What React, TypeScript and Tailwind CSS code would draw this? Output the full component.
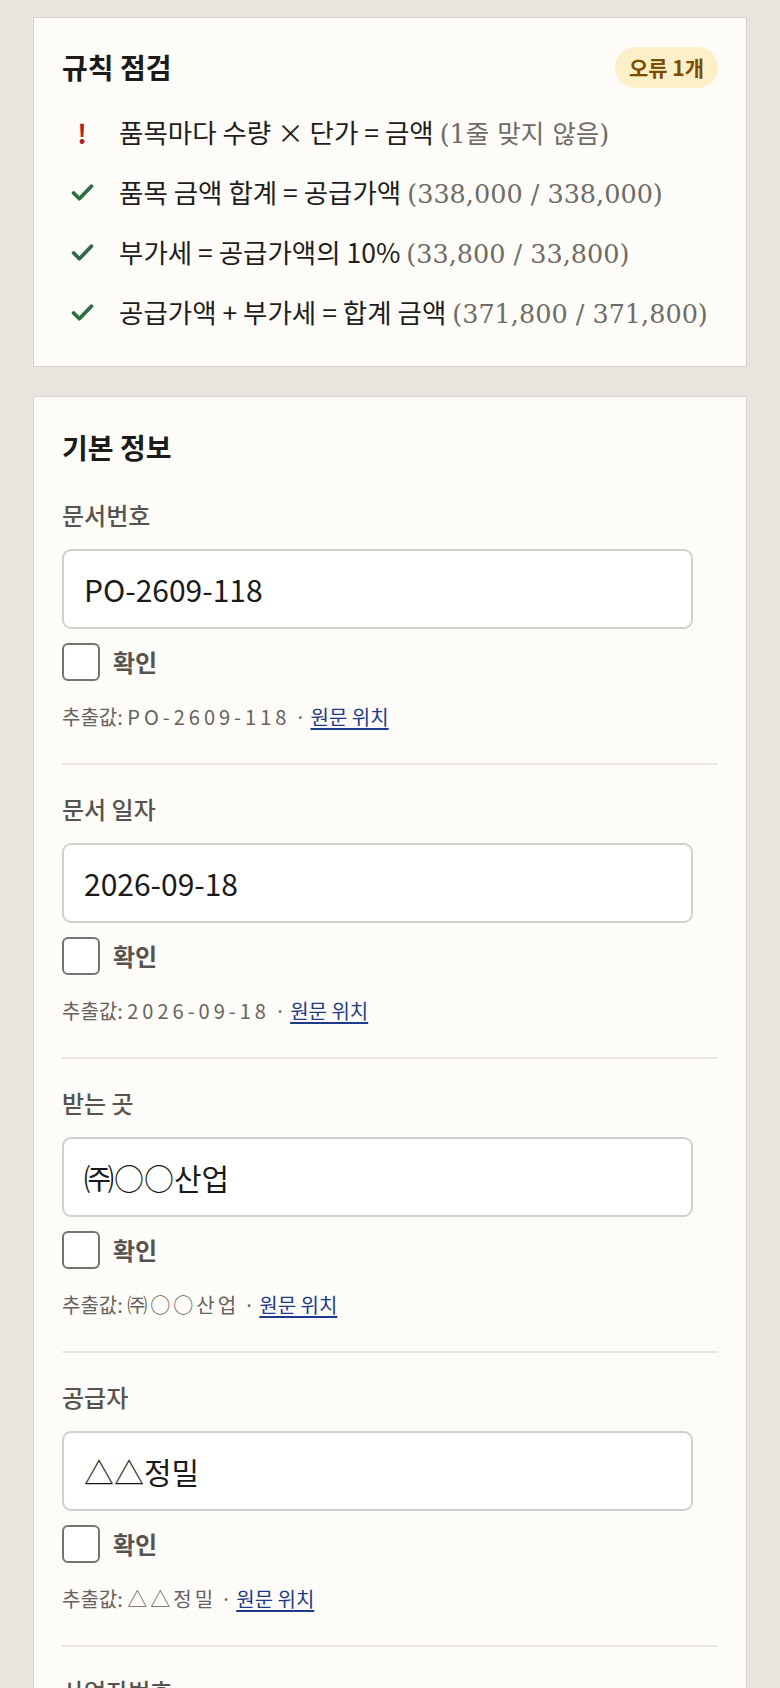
import React from "react"

const sans = { fontFamily: '"Noto Sans CJK KR", "Noto Sans", sans-serif' }
const serif = { fontFamily: '"DejaVu Serif", "Noto Sans CJK KR", serif' }

type Rule = { ok: boolean; text: string; note: string }

const rules: Rule[] = [
  { ok: false, text: "품목마다 수량 × 단가 = 금액", note: "(1줄 맞지 않음)" },
  { ok: true, text: "품목 금액 합계 = 공급가액", note: "(338,000 / 338,000)" },
  { ok: true, text: "부가세 = 공급가액의 10%", note: "(33,800 / 33,800)" },
  { ok: true, text: "공급가액 + 부가세 = 합계 금액", note: "(371,800 / 371,800)" },
]

const fields = [
  { label: "문서번호", value: "PO-2609-118", code: true },
  { label: "문서 일자", value: "2026-09-18", code: true },
  { label: "받는 곳", value: "㈜○○산업", code: false },
  { label: "공급자", value: "△△정밀", code: false },
  { label: "사업자번호", value: "123-45-67890", code: true },
]

const Check = () => (
  <svg width="23" height="19" viewBox="0 0 22 18" fill="none">
    <path d="M2.5 9.5 L8 15 L19.5 3" stroke="#2f6b45" strokeWidth="3.6" strokeLinecap="round" strokeLinejoin="round" />
  </svg>
)

const RuleCheck = () => {
  return (
    <div className="bg-[#fdfcf8] border border-[#d6d3cc] px-[28px] pt-[33px] pb-[37px]">
      <div className="flex justify-between items-center h-[32px]">
        <h2 className="text-[28px] font-bold text-[#1c1b19] leading-[32px]">규칙 점검</h2>
        <span className="bg-[#fdf0c9] text-[#7c4d00] font-bold text-[21px] rounded-full px-[14px] h-[41px] leading-[41px]">오류 1개</span>
      </div>
      <ul className="mt-[33px] flex flex-col gap-[27px]">
        {rules.map((r) => (
          <li key={r.text} className="flex items-center h-[33px] text-[26.5px] leading-[33px] text-[#1f1e1c] whitespace-nowrap">
            <span className="w-[40px] h-[33px] flex items-center justify-center mr-[17px]">
              {r.ok ? <Check /> : <span className="text-[#b42318] font-bold text-[26px] leading-[33px]">!</span>}
            </span>
            <span>
              {r.text}{" "}
              <span className="text-[#6f6b66] text-[25.5px]" style={serif}>
                {r.note}
              </span>
            </span>
          </li>
        ))}
      </ul>
    </div>
  )
}

const Field = ({ label, value, code }: { label: string; value: string; code: boolean }) => {
  return (
    <div className="pt-[27px] pb-[32px] border-b-2 border-[#ebe8e2]">
      <div className="text-[24px] leading-[33px] text-[#57544f] font-medium">{label}</div>
      <input
        readOnly
        value={value}
        className="mt-[18px] w-[631px] h-[80px] bg-white border-2 border-[#d2d0cc] rounded-[9px] px-[20px] text-[30px] text-[#1a1a1a] outline-none"
        style={sans}
      />
      <label className="mt-[14px] flex items-center gap-[13px]">
        <span className="w-[38px] h-[38px] rounded-[6px] border-2 border-[#777470] bg-white" />
        <span className="text-[24px] font-bold text-[#57544f]">확인</span>
      </label>
      <div className="mt-[22px] text-[20px] leading-[28px] text-[#66625d] whitespace-nowrap">
        추출값: <span className={code ? "tracking-[0.2em]" : "tracking-[0.15em]"}>{value}</span> ·{" "}
        <a href="#" className="text-[#1e3a8a] underline underline-offset-[3px]">원문 위치</a>
      </div>
    </div>
  )
}

export default function App() {
  return (
    <div className="min-h-screen bg-[#e8e5df] px-[33px] pt-[17px] pb-[40px] flex flex-col gap-[29px]" style={sans}>
      <RuleCheck />
      <div className="bg-[#fdfcf8] border border-[#d6d3cc] px-[28px] pt-[34px] pb-[20px]">
        <h2 className="text-[28px] font-bold text-[#1c1b19] leading-[32px] mb-[8px]">기본 정보</h2>
        {fields.map((f) => (
          <Field key={f.label} label={f.label} value={f.value} code={f.code} />
        ))}
      </div>
    </div>
  )
}
